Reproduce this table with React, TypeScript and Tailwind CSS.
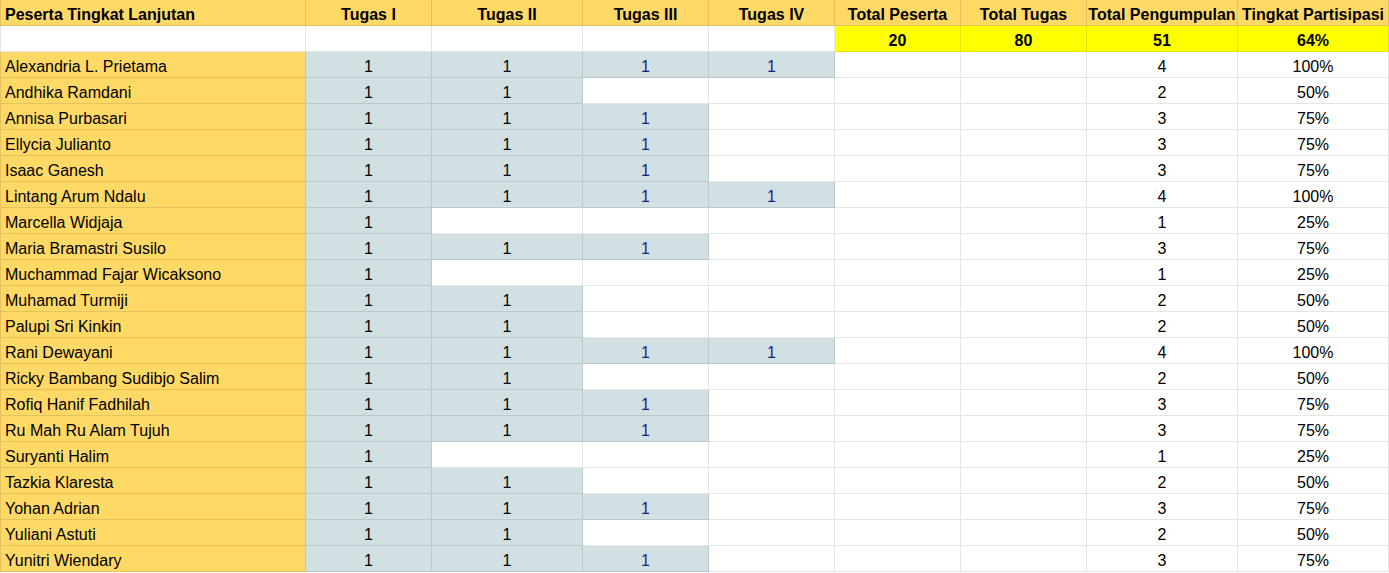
const peserta: [string, number][] = [
  ["Alexandria L. Prietama", 4],
  ["Andhika Ramdani", 2],
  ["Annisa Purbasari", 3],
  ["Ellycia Julianto", 3],
  ["Isaac Ganesh", 3],
  ["Lintang Arum Ndalu", 4],
  ["Marcella Widjaja", 1],
  ["Maria Bramastri Susilo", 3],
  ["Muchammad Fajar Wicaksono", 1],
  ["Muhamad Turmiji", 2],
  ["Palupi Sri Kinkin", 2],
  ["Rani Dewayani", 4],
  ["Ricky Bambang Sudibjo Salim", 2],
  ["Rofiq Hanif Fadhilah", 3],
  ["Ru Mah Ru Alam Tujuh", 3],
  ["Suryanti Halim", 1],
  ["Tazkia Klaresta", 2],
  ["Yohan Adrian", 3],
  ["Yuliani Astuti", 2],
  ["Yunitri Wiendary", 3],
];

const kolom = ["Tugas I", "Tugas II", "Tugas III", "Tugas IV", "Total Peserta", "Total Tugas", "Total Pengumpulan", "Tingkat Partisipasi"];

const cell = "h-[26px] pt-[6px] leading-[18px] border-r border-b border-black/10 whitespace-nowrap overflow-hidden";

export default function App(){
  return (
    <div className="w-[1389px] h-[573px] bg-white overflow-hidden text-[16px] text-black" style={{fontFamily:'"Liberation Sans", Arial, sans-serif'}}>
      <div className="grid grid-cols-[306px_126px_151px_126px_126px_126px_126px_151px_151px]">
        {/* header */}
        <div className={`${cell} border-l bg-[#ffd966] font-bold px-[4px]`}>Peserta Tingkat Lanjutan</div>
        {kolom.map(k=>(
          <div key={k} className={`${cell} bg-[#ffd966] font-bold text-center`}>{k}</div>
        ))}

        {/* ringkasan */}
        <div className={`${cell} border-l bg-white`}></div>
        {[0,1,2,3].map(i=><div key={i} className={`${cell} bg-white`}></div>)}
        {["20","80","51","64%"].map((v,i)=>(
          <div key={i} className={`${cell} bg-[#ffff00] font-bold text-center`}>{v}</div>
        ))}

        {/* peserta */}
        {peserta.map(([nama, n])=>(
          <div key={nama} className="contents">
            <div className={`${cell} border-l bg-[#ffd966] px-[4px]`}>{nama}</div>
            {[0,1,2,3].map(i=>(
              <div key={i} className={`${cell} text-center ${i<n ? "bg-[#d0e0e3]" : "bg-white"} ${i>=2 ? "text-[#1c1c8c]" : ""}`}>
                {i<n ? "1" : ""}
              </div>
            ))}
            <div className={`${cell} bg-white`}></div>
            <div className={`${cell} bg-white`}></div>
            <div className={`${cell} bg-white text-center`}>{n}</div>
            <div className={`${cell} bg-white text-center`}>{n*25}%</div>
          </div>
        ))}
      </div>
    </div>
  );
}
